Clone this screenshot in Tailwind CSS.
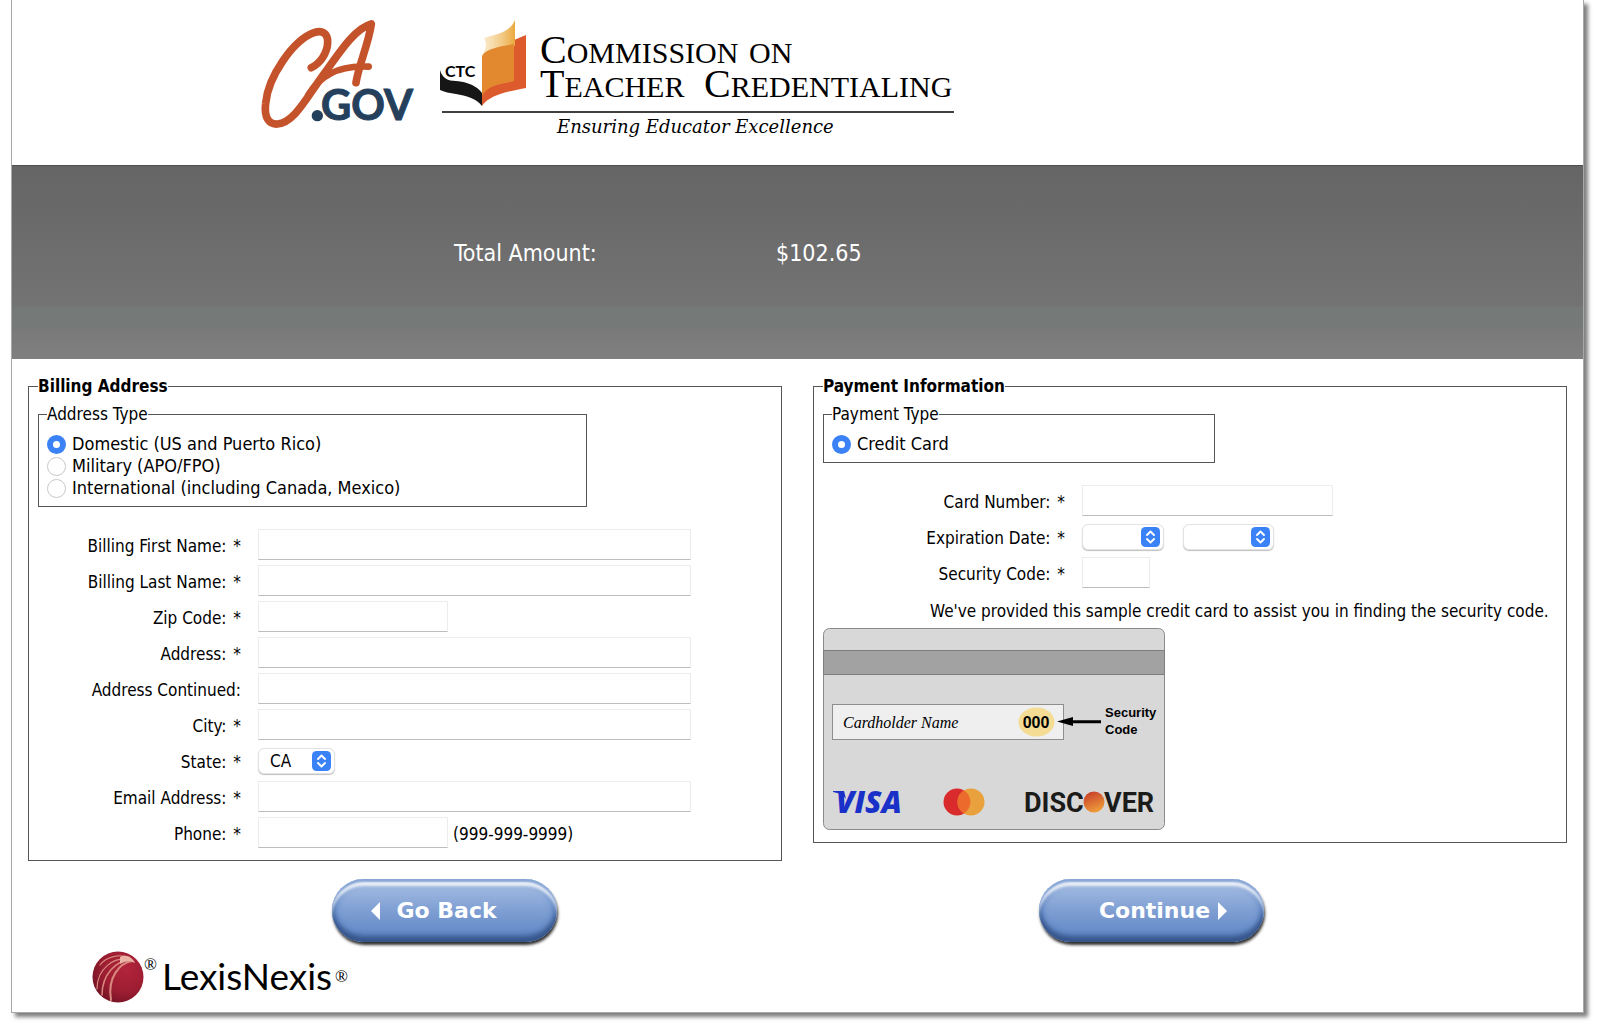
<!DOCTYPE html>
<html lang="en">

<head>
    <meta charset="UTF-8">
    <meta name="viewport" content="width=device-width, initial-scale=1.0">
    <title>Billing and Payment</title>
    <script src="https://cdn.jsdelivr.net/npm/@tailwindcss/browser@4"></script>
</head>

<body class="bg-white pb-4 font-['DejaVu_Sans_Condensed','Noto_Sans',sans-serif] text-[17px] leading-[22px] text-black">
    <div class="ml-[11px] mr-4 border-b border-l border-r border-[#a8a8a8] bg-white shadow-[4px_4px_4px_rgba(0,0,0,0.5)]">
        <!-- Logos -->
        <header class="flex h-[165px] items-start gap-6 pl-62 pt-4">
            <svg class="h-[115px] w-[154px] shrink-0" viewBox="60 48 462 345" role="img" aria-label="CA.gov">
                <path d="M214 203 C240 190 262 160 263 128 C264 98 246 90 222 98 C160 120 84 230 77 310 C72 352 86 374 112 372 C165 368 200 290 262 208 C310 140 350 84 394 72 C386 130 356 196 348 248" fill="none" stroke="#c4532b" stroke-width="23" stroke-linecap="round" stroke-linejoin="round" />
                <path d="M205 285 C240 225 300 195 386 200" fill="none" stroke="#c4532b" stroke-width="20" stroke-linecap="round" />
                <circle cx="232" cy="347" r="17" fill="#24405c" />
                <text x="243" y="360" class="font-['Lato',sans-serif] text-[125px] font-bold" fill="#24405c" stroke="#24405c" stroke-width="3">GOV</text>
            </svg>
            <svg class="h-[126px] w-[520px] shrink-0" viewBox="438 16 520 126" role="img" aria-label="Commission on Teacher Credentialing">
                <defs>
                    <linearGradient id="page" x1="0" y1="0" x2="1" y2="0">
                        <stop offset="0" stop-color="#f6d9a0" stop-opacity="0.5" />
                        <stop offset="1" stop-color="#eba93f" />
                    </linearGradient>
                </defs>
                <path d="M440 70 C442 78 448 81 456 81 C468 82 477 86 482 93 V106 C476 98 466 96 456 94 C450 93 444 92 440 90 Z" fill="#161616" />
                <path d="M514 40 L526 35 V88 C512 91 490 94 482 106 V94 C490 82 506 84 514 80 Z" fill="#dd5a2c" />
                <path d="M484 38 C498 34 510 32 515 20 V46 C504 46 490 48 482 56 C485 48 488 46 484 38 Z" fill="url(#page)" />
                <path d="M482 56 C486 48 504 46 514 44 V81 C504 84 488 84 482 96 Z" fill="#e2892f" />
                <text x="445" y="77" class="font-['Lato',sans-serif] text-[16px] font-bold">CTC</text>
                <g class="font-['Liberation_Serif',serif] text-[30px]">
                    <text x="540" y="63"><tspan class="text-[40px]">C</tspan>OMMISSION</text>
                    <text x="749" y="63">ON</text>
                    <text x="540" y="97"><tspan class="text-[40px]">T</tspan>EACHER</text>
                    <text x="704" y="97"><tspan class="text-[40px]">C</tspan>REDENTIALING</text>
                </g>
                <path d="M442 112 H954" stroke="#000" stroke-width="1.5" />
                <text x="557" y="133" class="font-['DejaVu_Serif',serif] text-[18px] italic">Ensuring Educator Excellence</text>
            </svg>
        </header>

        <!-- Amount band -->
        <div class="flex h-[194px] items-center border-t border-[#4f4f4f] bg-[linear-gradient(#656565,#737373_72%,#757978_74%,#757978_83%,#7a7a7a_86%,#808080)] pb-5 pl-[442px] text-[23px] leading-8 text-white">
            <span class="w-[322px]">Total Amount:</span>
            <span>$102.65</span>
        </div>

        <form class="px-4 pt-4">
            <div class="grid grid-cols-2 items-start gap-[31px]">
                <fieldset class="border border-[#555] px-[9px] pb-3 pt-1.5">
                    <legend class="font-bold">Billing Address</legend>
                    <fieldset class="w-[549px] border border-[#555] px-2 pb-[7px] pt-2">
                        <legend>Address Type</legend>
                        <label class="flex h-[22px] items-center gap-1.5 text-[18px]">
                            <input type="radio" name="addressType" checked class="size-[19px] appearance-none rounded-full border border-[#c8c8c8] checked:border-6 checked:border-[#3b82f7]">
                            Domestic (US and Puerto Rico)
                        </label>
                        <label class="flex h-[22px] items-center gap-1.5 text-[18px]">
                            <input type="radio" name="addressType" class="size-[19px] appearance-none rounded-full border border-[#c8c8c8] checked:border-6 checked:border-[#3b82f7]">
                            Military (APO/FPO)
                        </label>
                        <label class="flex h-[22px] items-center gap-1.5 text-[18px]">
                            <input type="radio" name="addressType" class="size-[19px] appearance-none rounded-full border border-[#c8c8c8] checked:border-6 checked:border-[#3b82f7]">
                            International (including Canada, Mexico)
                        </label>
                    </fieldset>

                    <div class="mt-[22px] grid auto-rows-[31px] grid-cols-[203px_1fr] items-center gap-x-[17px] gap-y-[5px]">
                        <label for="firstName" class="pt-0.5 text-right">Billing First Name: <span class="ml-0.5">*</span></label>
                        <input id="firstName" type="text" class="h-[31px] w-[433px] border border-b-[#bdbdbd] border-[#ececec] px-2">
                        <label for="lastName" class="pt-0.5 text-right">Billing Last Name: <span class="ml-0.5">*</span></label>
                        <input id="lastName" type="text" class="h-[31px] w-[433px] border border-b-[#bdbdbd] border-[#ececec] px-2">
                        <label for="zip" class="pt-0.5 text-right">Zip Code: <span class="ml-0.5">*</span></label>
                        <input id="zip" type="text" class="h-[31px] w-[190px] border border-b-[#bdbdbd] border-[#ececec] px-2">
                        <label for="address" class="pt-0.5 text-right">Address: <span class="ml-0.5">*</span></label>
                        <input id="address" type="text" class="h-[31px] w-[433px] border border-b-[#bdbdbd] border-[#ececec] px-2">
                        <label for="address2" class="pt-0.5 text-right">Address Continued:</label>
                        <input id="address2" type="text" class="h-[31px] w-[433px] border border-b-[#bdbdbd] border-[#ececec] px-2">
                        <label for="city" class="pt-0.5 text-right">City: <span class="ml-0.5">*</span></label>
                        <input id="city" type="text" class="h-[31px] w-[433px] border border-b-[#bdbdbd] border-[#ececec] px-2">
                        <label for="state" class="pt-0.5 text-right">State: <span class="ml-0.5">*</span></label>
                        <div class="relative w-[77px]">
                            <select id="state" class="block h-[26px] w-full appearance-none rounded-md border border-[#e2e2e2] bg-white pl-[11px] shadow-[0_1px_1px_rgba(0,0,0,0.25)]">
                                <option>CA</option>
                            </select>
                            <svg class="pointer-events-none absolute right-1 top-[3px] h-5 w-[19px]" viewBox="0 0 19 20">
                                <rect width="19" height="20" rx="4.5" fill="#3b82f7" />
                                <path d="M6 8 L9.500 4.500 L13 8 M6 12 L9.500 15.500 L13 12" fill="none" stroke="#fff" stroke-width="1.900" stroke-linecap="round" stroke-linejoin="round" />
                            </svg>
                        </div>
                        <label for="email" class="pt-0.5 text-right">Email Address: <span class="ml-0.5">*</span></label>
                        <input id="email" type="email" class="h-[31px] w-[433px] border border-b-[#bdbdbd] border-[#ececec] px-2">
                        <label for="phone" class="pt-0.5 text-right">Phone: <span class="ml-0.5">*</span></label>
                        <div class="flex items-center gap-[5px]">
                            <input id="phone" type="tel" class="h-[31px] w-[190px] border border-b-[#bdbdbd] border-[#ececec] px-2">
                            <span class="pt-0.5">(999-999-9999)</span>
                        </div>
                    </div>
                </fieldset>

                <fieldset class="border border-[#555] px-[9px] pb-3 pt-1.5">
                    <legend class="font-bold">Payment Information</legend>
                    <fieldset class="w-[392px] border border-[#555] px-2 pb-[7px] pt-2">
                        <legend>Payment Type</legend>
                        <label class="flex h-[22px] items-center gap-1.5 text-[18px]">
                            <input type="radio" name="paymentType" checked class="size-[19px] appearance-none rounded-full border border-[#c8c8c8] checked:border-6 checked:border-[#3b82f7]">
                            Credit Card
                        </label>
                    </fieldset>

                    <div class="mt-[22px] grid auto-rows-[31px] grid-cols-[242px_1fr] items-center gap-x-[17px] gap-y-[5px]">
                        <label for="cardNumber" class="pt-0.5 text-right">Card Number: <span class="ml-0.5">*</span></label>
                        <input id="cardNumber" type="text" class="h-[31px] w-[251px] border border-b-[#bdbdbd] border-[#ececec] px-2">
                        <label for="expMonth" class="pt-0.5 text-right">Expiration Date: <span class="ml-0.5">*</span></label>
                        <div class="flex gap-[19px]">
                            <div class="relative w-[82px]">
                                <select id="expMonth" class="block h-[26px] w-full appearance-none rounded-md border border-[#e2e2e2] bg-white pl-[11px] shadow-[0_1px_1px_rgba(0,0,0,0.25)]">
                                    <option></option>
                                </select>
                                <svg class="pointer-events-none absolute right-1 top-[3px] h-5 w-[19px]" viewBox="0 0 19 20">
                                    <rect width="19" height="20" rx="4.5" fill="#3b82f7" />
                                    <path d="M6 8 L9.500 4.500 L13 8 M6 12 L9.500 15.500 L13 12" fill="none" stroke="#fff" stroke-width="1.900" stroke-linecap="round" stroke-linejoin="round" />
                                </svg>
                            </div>
                            <div class="relative w-[91px]">
                                <select id="expYear" aria-label="Expiration Year" class="block h-[26px] w-full appearance-none rounded-md border border-[#e2e2e2] bg-white pl-[11px] shadow-[0_1px_1px_rgba(0,0,0,0.25)]">
                                    <option></option>
                                </select>
                                <svg class="pointer-events-none absolute right-1 top-[3px] h-5 w-[19px]" viewBox="0 0 19 20">
                                    <rect width="19" height="20" rx="4.5" fill="#3b82f7" />
                                    <path d="M6 8 L9.500 4.500 L13 8 M6 12 L9.500 15.500 L13 12" fill="none" stroke="#fff" stroke-width="1.900" stroke-linecap="round" stroke-linejoin="round" />
                                </svg>
                            </div>
                        </div>
                        <label for="cvv" class="pt-0.5 text-right">Security Code: <span class="ml-0.5">*</span></label>
                        <input id="cvv" type="text" class="h-[31px] w-[68px] border border-b-[#bdbdbd] border-[#ececec] px-2">
                    </div>
                    <p class="mt-3 whitespace-nowrap pl-[107px]">We've provided this sample credit card to assist you in finding the security code.</p>

                    <!-- Back of a sample card -->
                    <svg class="mt-1.5 h-[202px] w-[342px]" viewBox="0 0 342 202" role="img" aria-label="Sample credit card">
                        <defs>
                            <linearGradient id="discover" x1="0.3" y1="0" x2="0.7" y2="1">
                                <stop offset="0" stop-color="#c8402a" />
                                <stop offset="1" stop-color="#f2a23c" />
                            </linearGradient>
                        </defs>
                        <rect x="0.5" y="0.5" width="341" height="201" rx="6" fill="#d8d8d8" stroke="#8a8a8a" />
                        <path d="M0.500 22.500 H341.500 V46.500 H0.500 Z" fill="#a2a2a2" stroke="#7d7d7d" />
                        <rect x="9.500" y="76.500" width="231" height="35" fill="#efefef" stroke="#8e8e8e" />
                        <text x="20" y="100" class="font-['Liberation_Serif',serif] text-[16px] italic">Cardholder Name</text>
                        <ellipse cx="213.500" cy="94" rx="18" ry="14.500" fill="#f4dc94" />
                        <text x="213" y="100" text-anchor="middle" class="font-['Liberation_Sans',sans-serif] text-[16px] font-bold">000</text>
                        <path d="M234 93.500 L250 89 V92.200 H278 V95.200 H250 V98 Z" />
                        <g class="font-['Liberation_Sans',sans-serif] text-[13px] font-bold">
                            <text x="282" y="89">Security</text>
                            <text x="282" y="106">Code</text>
                        </g>
                        <text x="13" y="185" fill="#1a31c9" class="font-['Open_Sans',sans-serif] text-[30px] font-extrabold italic">VISA</text>
                        <path d="M10 163 H21 L23 171 C20 167 16 165 10 164 Z" fill="#1a31c9" />
                        <circle cx="134" cy="174" r="13.500" fill="#d92b2b" />
                        <circle cx="148" cy="174" r="13.500" fill="#e9a13e" />
                        <path d="M141 162.500 A13.500 13.500 0 0 1 141 185.500 A13.500 13.500 0 0 1 141 162.500 Z" fill="#ec6a2c" />
                        <g class="font-['Roboto',sans-serif] text-[27px] font-bold" fill="#1b1b19">
                            <text x="201" y="184">DISC</text>
                            <text x="281" y="184">VER</text>
                        </g>
                        <circle cx="271" cy="174" r="10.500" fill="url(#discover)" />
                    </svg>
                </fieldset>
            </div>

            <div class="mt-[18px] flex justify-center gap-[482px]">
                <button type="button" class="flex h-[63px] w-[225px] items-center justify-center gap-4 rounded-full bg-linear-to-b from-[#a9c0e4] via-[#7f9fd3] to-[#5a82c2] pr-5 font-['DejaVu_Sans',sans-serif] text-[22px] font-bold text-white shadow-[inset_0_3px_2px_#86a5d6,inset_0_8px_3px_-1px_#ffffffdd,inset_0_-6px_5px_#36558a,inset_0_0_6px_4px_#5f86c4,1px_3px_3px_#000000d0]">
                    <svg class="h-[18px] w-[9px]" viewBox="0 0 9 18"><path d="M9 0 V18 L0 9 Z" fill="#fff" /></svg>
                    Go Back
                </button>
                <button type="submit" class="flex h-[63px] w-[225px] items-center justify-center gap-2 rounded-full bg-linear-to-b from-[#a9c0e4] via-[#7f9fd3] to-[#5a82c2] pl-6 font-['DejaVu_Sans',sans-serif] text-[22px] font-bold text-white shadow-[inset_0_3px_2px_#86a5d6,inset_0_8px_3px_-1px_#ffffffdd,inset_0_-6px_5px_#36558a,inset_0_0_6px_4px_#5f86c4,1px_3px_3px_#000000d0]">
                    Continue
                    <svg class="h-[18px] w-[9px]" viewBox="0 0 9 18"><path d="M0 0 V18 L9 9 Z" fill="#fff" /></svg>
                </button>
            </div>
        </form>

        <footer class="pb-[9px] pl-20 pt-[9px]">
            <svg class="h-[52px] w-[260px]" viewBox="0 0 260 52" role="img" aria-label="LexisNexis">
                <defs>
                    <radialGradient id="ball" cx="0.65" cy="0.35" r="0.75">
                        <stop offset="0" stop-color="#b3243c" />
                        <stop offset="0.6" stop-color="#9c1d31" />
                        <stop offset="1" stop-color="#6e1222" />
                    </radialGradient>
                </defs>
                <ellipse cx="26" cy="26" rx="25.500" ry="25.500" fill="url(#ball)" />
                <g fill="none" stroke="#d98a80" stroke-linecap="round">
                    <path d="M40 9 C22 4 5 18 5 38" stroke-width="1.200" />
                    <path d="M40 10 C24 8 10 24 10 44" stroke-width="1.500" />
                    <path d="M40 10 C28 12 15 26 19 49" stroke-width="2" />
                    <path d="M38 7 C28 2 14 6 8 14" stroke-width="1.200" />
                </g>
                <path d="M28 6 C34 3 40 6 43 12 L38 10 C34 10 31 11 28 13 Z" fill="#e9b3a6" />
                <text x="52" y="19" class="font-['Liberation_Serif',serif] text-[17px]">®</text>
                <text x="70" y="39" class="font-['Lato',sans-serif] text-[37px]">LexisNexis</text>
                <text x="243" y="31" class="font-['Liberation_Serif',serif] text-[17px]">®</text>
            </svg>
        </footer>
    </div>
</body>

</html>
